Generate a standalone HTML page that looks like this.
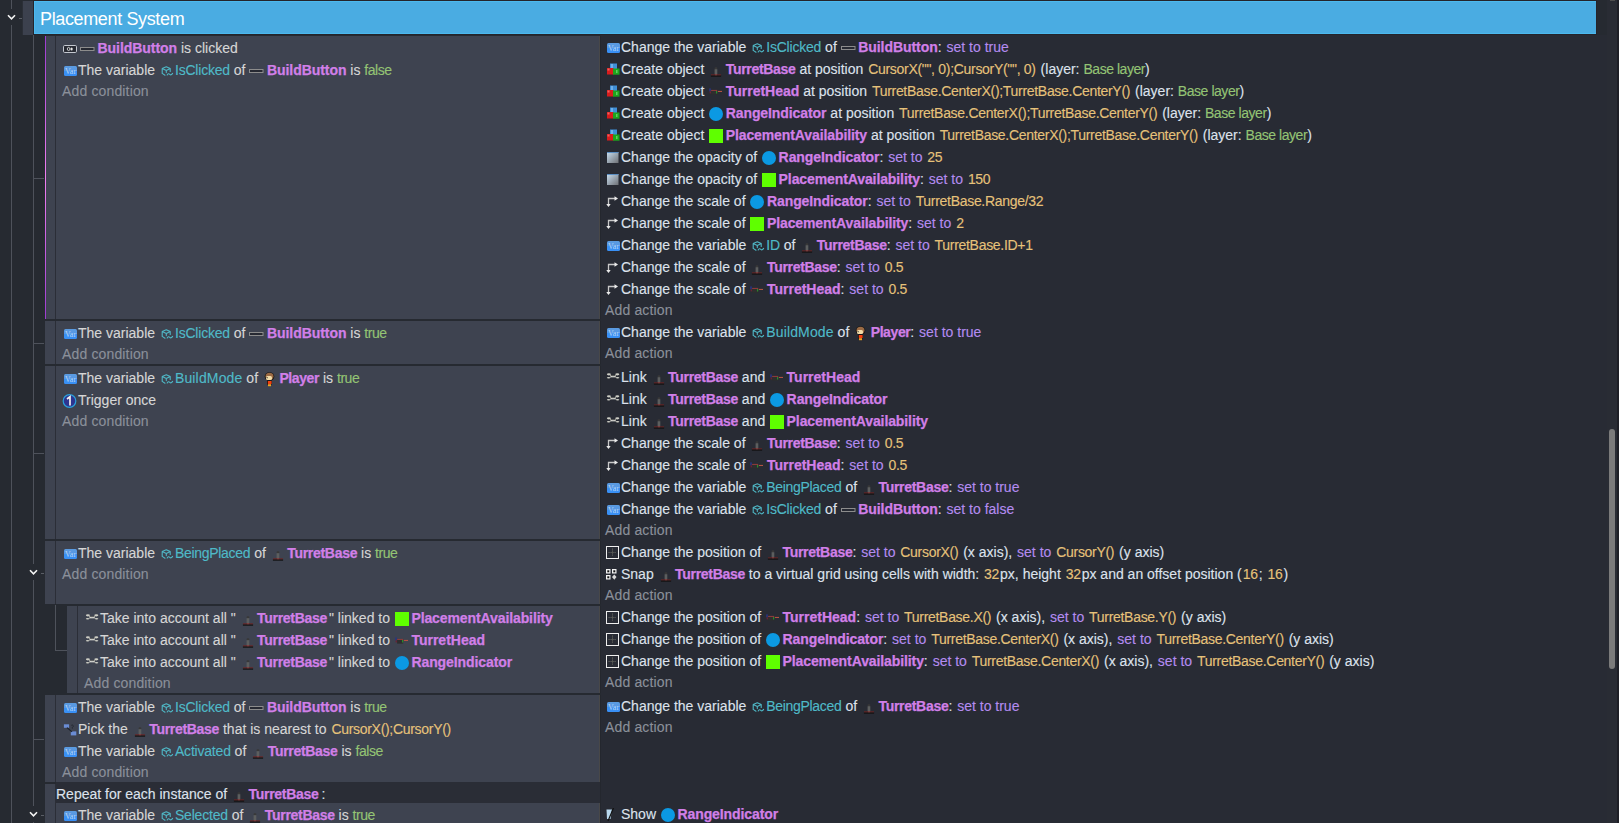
<!DOCTYPE html><html><head><meta charset="utf-8"><style>
html,body{margin:0;padding:0;width:1619px;height:823px;overflow:hidden;background:#262a31}
body>div,body>svg{position:absolute}
.ln{position:absolute;white-space:pre;font-family:"Liberation Sans",sans-serif;font-size:14px;line-height:22px;height:22px;-webkit-text-stroke:0.12px currentColor}
.c{color:#d6d6d6} .a{color:#dde2ec} .add{color:#8b909a;letter-spacing:0.15px}
.o{color:#d17fe8;font-weight:bold;-webkit-text-stroke:0.25px currentColor} .v{color:#4fbac8;letter-spacing:-0.2px} .p{color:#b48cf0;letter-spacing:0;margin-left:1px} .e{color:#e6c27a;padding:0 1px;letter-spacing:-0.3px} .g{color:#94c474;letter-spacing:-0.45px}
.ic{display:inline-block;position:relative} .ic svg{position:absolute;left:0;top:0;display:block}
.hd{position:absolute;font-family:"Liberation Sans",sans-serif;font-size:18px;letter-spacing:-0.36px;line-height:22px;color:#fff;white-space:pre}
</style></head><body><div style="left:0px;top:0px;width:1619px;height:823px;background:#262a31;"></div>
<div style="left:601px;top:35px;width:1006px;height:788px;background:#282b34;"></div>
<div style="left:11px;top:0px;width:1px;height:9px;background:#4e525b;"></div>
<div style="left:11px;top:25px;width:1px;height:798px;background:#4e525b;"></div>
<div style="left:19px;top:18px;width:3px;height:1px;background:#5a5e66;"></div>
<div style="left:33px;top:35px;width:1px;height:529px;background:#4e525b;"></div>
<div style="left:33px;top:580px;width:1px;height:226px;background:#4e525b;"></div>
<div style="left:33px;top:822px;width:1px;height:1px;background:#4e525b;"></div>
<div style="left:33px;top:178px;width:11px;height:1px;background:#4e525b;"></div>
<div style="left:33px;top:343px;width:11px;height:1px;background:#4e525b;"></div>
<div style="left:33px;top:453px;width:11px;height:1px;background:#4e525b;"></div>
<div style="left:33px;top:739px;width:11px;height:1px;background:#4e525b;"></div>
<div style="left:41px;top:573px;width:3px;height:1px;background:#5a5e66;"></div>
<div style="left:41px;top:815px;width:3px;height:1px;background:#5a5e66;"></div>
<div style="left:55px;top:605px;width:1px;height:46px;background:#4e525b;"></div>
<div style="left:55px;top:650px;width:12px;height:1px;background:#4e525b;"></div>
<div style="left:22px;top:1px;width:1px;height:34px;background:#2b2f37;"></div>
<div style="left:23px;top:1px;width:10px;height:34px;background:#3c414e;"></div>
<div style="left:33px;top:0px;width:1564px;height:35px;background:#25242b;"></div>
<div style="left:34px;top:1px;width:1562px;height:33px;background:#4cb9ee;"></div>
<div style="left:35px;top:2px;width:1561px;height:31px;background:#4aace2;"></div>
<div class="hd" style="left:40px;top:8px">Placement System</div>
<div style="left:45px;top:36px;width:10px;height:283px;background:#3e4350;"></div>
<div style="left:55px;top:36px;width:1px;height:283px;background:#2b2e37;"></div>
<div style="left:56px;top:36px;width:543px;height:283px;background:#3e4350;"></div>
<div style="left:599px;top:36px;width:1px;height:283px;background:#484848;"></div>
<div style="left:600px;top:36px;width:1px;height:283px;background:#24272e;"></div>
<div style="left:45px;top:36px;width:1px;height:283px;background:;background:linear-gradient(#9b3bd0,#f07ff0 50%,#9b3bd0)"></div>
<div style="left:45px;top:321px;width:10px;height:43px;background:#3e4350;"></div>
<div style="left:55px;top:321px;width:1px;height:43px;background:#2b2e37;"></div>
<div style="left:56px;top:321px;width:543px;height:43px;background:#3e4350;"></div>
<div style="left:599px;top:321px;width:1px;height:43px;background:#484848;"></div>
<div style="left:600px;top:321px;width:1px;height:43px;background:#24272e;"></div>
<div style="left:45px;top:366px;width:10px;height:173px;background:#3e4350;"></div>
<div style="left:55px;top:366px;width:1px;height:173px;background:#2b2e37;"></div>
<div style="left:56px;top:366px;width:543px;height:173px;background:#3e4350;"></div>
<div style="left:599px;top:366px;width:1px;height:173px;background:#484848;"></div>
<div style="left:600px;top:366px;width:1px;height:173px;background:#24272e;"></div>
<div style="left:45px;top:541px;width:10px;height:63px;background:#3e4350;"></div>
<div style="left:55px;top:541px;width:1px;height:63px;background:#2b2e37;"></div>
<div style="left:56px;top:541px;width:543px;height:63px;background:#3e4350;"></div>
<div style="left:599px;top:541px;width:1px;height:63px;background:#484848;"></div>
<div style="left:600px;top:541px;width:1px;height:63px;background:#24272e;"></div>
<div style="left:67px;top:606px;width:10px;height:87px;background:#3e4350;"></div>
<div style="left:77px;top:606px;width:1px;height:87px;background:#2b2e37;"></div>
<div style="left:78px;top:606px;width:521px;height:87px;background:#3e4350;"></div>
<div style="left:599px;top:606px;width:1px;height:87px;background:#484848;"></div>
<div style="left:600px;top:606px;width:1px;height:87px;background:#24272e;"></div>
<div style="left:45px;top:695px;width:10px;height:87px;background:#3e4350;"></div>
<div style="left:55px;top:695px;width:1px;height:87px;background:#2b2e37;"></div>
<div style="left:56px;top:695px;width:543px;height:87px;background:#3e4350;"></div>
<div style="left:599px;top:695px;width:1px;height:87px;background:#484848;"></div>
<div style="left:600px;top:695px;width:1px;height:87px;background:#24272e;"></div>
<div style="left:45px;top:784px;width:10px;height:39px;background:#3e4350;"></div>
<div style="left:55px;top:784px;width:1px;height:39px;background:#2b2e37;"></div>
<div style="left:56px;top:782px;width:544px;height:21px;background:#2a2d36;"></div>
<div style="left:56px;top:803px;width:543px;height:20px;background:#3e4350;"></div>
<div style="left:599px;top:803px;width:1px;height:20px;background:#484848;"></div>
<div style="left:600px;top:782px;width:1px;height:41px;background:#24272e;"></div>
<svg style="position:absolute;left:7px;top:13.5px" width="9" height="7" viewBox="0 0 9 7"><path d="M1 1.2 L4.5 4.8 L8 1.2" stroke="#f4f4f4" stroke-width="1.6" fill="none"/></svg>
<svg style="position:absolute;left:29px;top:569px" width="9" height="7" viewBox="0 0 9 7"><path d="M1 1.2 L4.5 4.8 L8 1.2" stroke="#f4f4f4" stroke-width="1.6" fill="none"/></svg>
<svg style="position:absolute;left:29px;top:811px" width="9" height="7" viewBox="0 0 9 7"><path d="M1 1.2 L4.5 4.8 L8 1.2" stroke="#f4f4f4" stroke-width="1.6" fill="none"/></svg>
<div style="left:1607px;top:0px;width:10px;height:823px;background:#292c34;"></div>
<div style="left:1617px;top:0px;width:2px;height:823px;background:#1e1f26;"></div>
<div style="left:1609px;top:429px;width:6px;height:240px;background:#7b7b7b;border-radius:3px"></div>
<div style="left:1610px;top:0px;width:5px;height:1px;background:#4e4e4e;"></div>
<div class="ln c" style="left:62px;top:37px"><span class="ic" style="width:18px;height:8px;vertical-align:0px;margin-left:0px;margin-right:0px"><svg width="18" height="8" viewBox="0 0 18 8"><rect x="1.5" y="0.5" width="13" height="7" rx="1.2" stroke="#c4c8d0" stroke-width="1" fill="#272a33"/><ellipse cx="6.6" cy="4" rx="1.3" ry="1.6" stroke="#e8e8e8" stroke-width="0.8" fill="none"/><ellipse cx="9.6" cy="4" rx="1.1" ry="1.5" fill="#e8e8e8"/></svg></span><span class="ic" style="width:16px;height:4px;vertical-align:2px;margin-left:0px;margin-right:0px"><svg width="16" height="4" viewBox="0 0 16 4"><rect x="0.5" y="0.5" width="13.5" height="3" stroke="#8c8c8c" stroke-width="1" fill="#262932"/></svg></span><span style="display:inline-block;width:1.5px"></span><b class="o" style="letter-spacing:-0.05px">BuildButton</b> is clicked</div>
<div class="ln c" style="left:62px;top:59px"><span class="ic" style="width:16px;height:10px;vertical-align:-1px;margin-left:0px;margin-right:0px"><svg width="16" height="10" viewBox="0 0 16 10"><defs><linearGradient id="gv" x1="0" y1="0" x2="0" y2="1"><stop offset="0" stop-color="#5b9be0"/><stop offset=".5" stop-color="#5597e6"/><stop offset=".5" stop-color="#3a8ff2"/><stop offset="1" stop-color="#3990f6"/></linearGradient></defs><rect x="2" y="0" width="13" height="10" rx="1.5" fill="url(#gv)"/><text x="8.5" y="8" font-family="Liberation Serif" font-size="8" fill="#b8d4f4" text-anchor="middle">Var</text></svg></span>The variable <span class="ic" style="width:16px;height:10px;vertical-align:-1px;margin-left:0px;margin-right:0px"><svg width="16" height="10" viewBox="0 0 16 10"><g stroke="#4fb8c6" stroke-width="1.1" fill="none" stroke-linejoin="round" stroke-linecap="round"><path d="M3.2 7.4 V2.6 L7.3 0.7 L11.2 2.6 V5.4 M3.2 2.6 L7.3 4.5 L11.2 2.6 M7.3 4.5 V6.6 M3.2 7.4 L6 9.2"/><path d="M8.2 9 Q9.3 7 10.8 8.3 Q12.1 9.7 13.6 7.4"/></g></svg></span><span class="v">IsClicked</span> of <span class="ic" style="width:16px;height:4px;vertical-align:2px;margin-left:0px;margin-right:0px"><svg width="16" height="4" viewBox="0 0 16 4"><rect x="0.5" y="0.5" width="13.5" height="3" stroke="#8c8c8c" stroke-width="1" fill="#262932"/></svg></span><span style="display:inline-block;width:1.5px"></span><b class="o" style="letter-spacing:-0.05px">BuildButton</b> is <span class="g">false</span></div>
<div class="ln add" style="left:62px;top:80px">Add condition</div>
<div class="ln a" style="left:605px;top:36px"><span class="ic" style="width:16px;height:10px;vertical-align:-1px;margin-left:0px;margin-right:0px"><svg width="16" height="10" viewBox="0 0 16 10"><defs><linearGradient id="gv" x1="0" y1="0" x2="0" y2="1"><stop offset="0" stop-color="#5b9be0"/><stop offset=".5" stop-color="#5597e6"/><stop offset=".5" stop-color="#3a8ff2"/><stop offset="1" stop-color="#3990f6"/></linearGradient></defs><rect x="2" y="0" width="13" height="10" rx="1.5" fill="url(#gv)"/><text x="8.5" y="8" font-family="Liberation Serif" font-size="8" fill="#b8d4f4" text-anchor="middle">Var</text></svg></span>Change the variable <span class="ic" style="width:16px;height:10px;vertical-align:-1px;margin-left:0px;margin-right:0px"><svg width="16" height="10" viewBox="0 0 16 10"><g stroke="#4fb8c6" stroke-width="1.1" fill="none" stroke-linejoin="round" stroke-linecap="round"><path d="M3.2 7.4 V2.6 L7.3 0.7 L11.2 2.6 V5.4 M3.2 2.6 L7.3 4.5 L11.2 2.6 M7.3 4.5 V6.6 M3.2 7.4 L6 9.2"/><path d="M8.2 9 Q9.3 7 10.8 8.3 Q12.1 9.7 13.6 7.4"/></g></svg></span><span class="v">IsClicked</span> of <span class="ic" style="width:16px;height:4px;vertical-align:2px;margin-left:0px;margin-right:0px"><svg width="16" height="4" viewBox="0 0 16 4"><rect x="0.5" y="0.5" width="13.5" height="3" stroke="#8c8c8c" stroke-width="1" fill="#262932"/></svg></span><span style="display:inline-block;width:1.5px"></span><b class="o" style="letter-spacing:-0.05px">BuildButton</b>: <span class="p">set to true</span></div>
<div class="ln a" style="left:605px;top:58px"><span class="ic" style="width:16px;height:12px;vertical-align:-1px;margin-left:0px;margin-right:0px"><svg width="16" height="12" viewBox="0 0 16 12"><rect x="5" y="0.5" width="7" height="5.5" fill="#3f8fd8"/><rect x="6" y="1" width="2" height="4" fill="#6fb0ea"/><rect x="2" y="5" width="6.5" height="6.5" fill="#d91c1c"/><rect x="2.5" y="5.5" width="2" height="2" fill="#f06060"/><rect x="8" y="5.5" width="6.5" height="6.2" fill="#1da51d"/><rect x="11" y="7" width="1.5" height="3" fill="#60d060"/></svg></span>Create object <span class="ic" style="width:16px;height:10px;vertical-align:-3px;margin-left:0px;margin-right:0px"><svg width="16" height="10" viewBox="0 0 16 10"><rect x="6.6" y="0.3" width="2.7" height="2" rx="0.8" fill="#383838"/><rect x="6.6" y="2.2" width="2.7" height="5.4" fill="#5c5e5e"/><rect x="3" y="7.4" width="10" height="1.2" fill="#6e2222"/><rect x="7" y="7.4" width="2" height="1.2" fill="#8a4444"/><rect x="2.9" y="8.5" width="10.2" height="1.2" fill="#121212"/></svg></span><span style="display:inline-block;width:1.5px"></span><b class="o" style="letter-spacing:-0.3px">TurretBase</b> at position <span class="e">CursorX(&quot;&quot;, 0);CursorY(&quot;&quot;, 0)</span> (layer: <span class="g">Base layer</span>)</div>
<div class="ln a" style="left:605px;top:80px"><span class="ic" style="width:16px;height:12px;vertical-align:-1px;margin-left:0px;margin-right:0px"><svg width="16" height="12" viewBox="0 0 16 12"><rect x="5" y="0.5" width="7" height="5.5" fill="#3f8fd8"/><rect x="6" y="1" width="2" height="4" fill="#6fb0ea"/><rect x="2" y="5" width="6.5" height="6.5" fill="#d91c1c"/><rect x="2.5" y="5.5" width="2" height="2" fill="#f06060"/><rect x="8" y="5.5" width="6.5" height="6.2" fill="#1da51d"/><rect x="11" y="7" width="1.5" height="3" fill="#60d060"/></svg></span>Create object <span class="ic" style="width:16px;height:7px;vertical-align:1px;margin-left:0px;margin-right:0px"><svg width="16" height="7" viewBox="0 0 16 7"><rect x="1.2" y="0.4" width="1.6" height="3" fill="#2a3580"/><rect x="1.6" y="3.4" width="1.6" height="2" fill="#6a2232"/><rect x="3.1" y="2" width="6.1" height="4.6" fill="#2e2e2e"/><rect x="3.1" y="1.9" width="6.1" height="1.1" fill="#8a3a3a"/><rect x="8" y="3" width="1.2" height="2.5" fill="#2a8a2a"/><rect x="9.9" y="2.9" width="4.1" height="1.1" fill="#b25242"/></svg></span><span style="display:inline-block;width:1.5px"></span><b class="o">TurretHead</b> at position <span class="e">TurretBase.CenterX();TurretBase.CenterY()</span> (layer: <span class="g">Base layer</span>)</div>
<div class="ln a" style="left:605px;top:102px"><span class="ic" style="width:16px;height:12px;vertical-align:-1px;margin-left:0px;margin-right:0px"><svg width="16" height="12" viewBox="0 0 16 12"><rect x="5" y="0.5" width="7" height="5.5" fill="#3f8fd8"/><rect x="6" y="1" width="2" height="4" fill="#6fb0ea"/><rect x="2" y="5" width="6.5" height="6.5" fill="#d91c1c"/><rect x="2.5" y="5.5" width="2" height="2" fill="#f06060"/><rect x="8" y="5.5" width="6.5" height="6.2" fill="#1da51d"/><rect x="11" y="7" width="1.5" height="3" fill="#60d060"/></svg></span>Create object <span class="ic" style="width:16px;height:14px;vertical-align:-3px;margin-left:0px;margin-right:0px"><svg width="16" height="14" viewBox="0 0 16 14"><circle cx="8" cy="7" r="7" fill="#0b99e3"/></svg></span><span style="display:inline-block;width:1.5px"></span><b class="o" style="letter-spacing:-0.08px">RangeIndicator</b> at position <span class="e">TurretBase.CenterX();TurretBase.CenterY()</span> (layer: <span class="g">Base layer</span>)</div>
<div class="ln a" style="left:605px;top:124px"><span class="ic" style="width:16px;height:12px;vertical-align:-1px;margin-left:0px;margin-right:0px"><svg width="16" height="12" viewBox="0 0 16 12"><rect x="5" y="0.5" width="7" height="5.5" fill="#3f8fd8"/><rect x="6" y="1" width="2" height="4" fill="#6fb0ea"/><rect x="2" y="5" width="6.5" height="6.5" fill="#d91c1c"/><rect x="2.5" y="5.5" width="2" height="2" fill="#f06060"/><rect x="8" y="5.5" width="6.5" height="6.2" fill="#1da51d"/><rect x="11" y="7" width="1.5" height="3" fill="#60d060"/></svg></span>Create object <span class="ic" style="width:16px;height:14px;vertical-align:-3px;margin-left:0px;margin-right:0px"><svg width="16" height="14" viewBox="0 0 16 14"><rect x="1" y="0" width="14" height="14" fill="#5fff00"/></svg></span><span style="display:inline-block;width:1.5px"></span><b class="o" style="letter-spacing:-0.1px">PlacementAvailability</b> at position <span class="e">TurretBase.CenterX();TurretBase.CenterY()</span> (layer: <span class="g">Base layer</span>)</div>
<div class="ln a" style="left:605px;top:146px"><span class="ic" style="width:16px;height:11px;vertical-align:-1px;margin-left:0px;margin-right:0px"><svg width="16" height="11" viewBox="0 0 16 11"><defs><linearGradient id="go" x1="0" y1="0" x2="1" y2="1"><stop offset="0" stop-color="#c8def0"/><stop offset="1" stop-color="#6e7075"/></linearGradient></defs><rect x="2" y="0" width="11.5" height="11" fill="url(#go)"/><rect x="2" y="0" width="11.5" height="1" fill="#5b8fc4"/></svg></span>Change the opacity of <span class="ic" style="width:16px;height:14px;vertical-align:-3px;margin-left:0px;margin-right:0px"><svg width="16" height="14" viewBox="0 0 16 14"><circle cx="8" cy="7" r="7" fill="#0b99e3"/></svg></span><span style="display:inline-block;width:1.5px"></span><b class="o" style="letter-spacing:-0.08px">RangeIndicator</b>: <span class="p">set to</span> <span class="e">25</span></div>
<div class="ln a" style="left:605px;top:168px"><span class="ic" style="width:16px;height:11px;vertical-align:-1px;margin-left:0px;margin-right:0px"><svg width="16" height="11" viewBox="0 0 16 11"><defs><linearGradient id="go" x1="0" y1="0" x2="1" y2="1"><stop offset="0" stop-color="#c8def0"/><stop offset="1" stop-color="#6e7075"/></linearGradient></defs><rect x="2" y="0" width="11.5" height="11" fill="url(#go)"/><rect x="2" y="0" width="11.5" height="1" fill="#5b8fc4"/></svg></span>Change the opacity of <span class="ic" style="width:16px;height:14px;vertical-align:-3px;margin-left:0px;margin-right:0px"><svg width="16" height="14" viewBox="0 0 16 14"><rect x="1" y="0" width="14" height="14" fill="#5fff00"/></svg></span><span style="display:inline-block;width:1.5px"></span><b class="o" style="letter-spacing:-0.1px">PlacementAvailability</b>: <span class="p">set to</span> <span class="e">150</span></div>
<div class="ln a" style="left:605px;top:190px"><span class="ic" style="width:16px;height:11px;vertical-align:-1px;margin-left:0px;margin-right:0px"><svg width="16" height="11" viewBox="0 0 16 11"><path d="M3.5 10 V2.5 H10" stroke="#c8c8c8" stroke-width="1.3" fill="none"/><path d="M9.5 0.3 L13 2.5 L9.5 4.7 Z" fill="#eaeaea"/><path d="M1.3 8 L3.5 11 L5.7 8 Z" fill="#eaeaea"/></svg></span>Change the scale of <span class="ic" style="width:16px;height:14px;vertical-align:-3px;margin-left:0px;margin-right:0px"><svg width="16" height="14" viewBox="0 0 16 14"><circle cx="8" cy="7" r="7" fill="#0b99e3"/></svg></span><span style="display:inline-block;width:1.5px"></span><b class="o" style="letter-spacing:-0.08px">RangeIndicator</b>: <span class="p">set to</span> <span class="e">TurretBase.Range/32</span></div>
<div class="ln a" style="left:605px;top:212px"><span class="ic" style="width:16px;height:11px;vertical-align:-1px;margin-left:0px;margin-right:0px"><svg width="16" height="11" viewBox="0 0 16 11"><path d="M3.5 10 V2.5 H10" stroke="#c8c8c8" stroke-width="1.3" fill="none"/><path d="M9.5 0.3 L13 2.5 L9.5 4.7 Z" fill="#eaeaea"/><path d="M1.3 8 L3.5 11 L5.7 8 Z" fill="#eaeaea"/></svg></span>Change the scale of <span class="ic" style="width:16px;height:14px;vertical-align:-3px;margin-left:0px;margin-right:0px"><svg width="16" height="14" viewBox="0 0 16 14"><rect x="1" y="0" width="14" height="14" fill="#5fff00"/></svg></span><span style="display:inline-block;width:1.5px"></span><b class="o" style="letter-spacing:-0.1px">PlacementAvailability</b>: <span class="p">set to</span> <span class="e">2</span></div>
<div class="ln a" style="left:605px;top:234px"><span class="ic" style="width:16px;height:10px;vertical-align:-1px;margin-left:0px;margin-right:0px"><svg width="16" height="10" viewBox="0 0 16 10"><defs><linearGradient id="gv" x1="0" y1="0" x2="0" y2="1"><stop offset="0" stop-color="#5b9be0"/><stop offset=".5" stop-color="#5597e6"/><stop offset=".5" stop-color="#3a8ff2"/><stop offset="1" stop-color="#3990f6"/></linearGradient></defs><rect x="2" y="0" width="13" height="10" rx="1.5" fill="url(#gv)"/><text x="8.5" y="8" font-family="Liberation Serif" font-size="8" fill="#b8d4f4" text-anchor="middle">Var</text></svg></span>Change the variable <span class="ic" style="width:16px;height:10px;vertical-align:-1px;margin-left:0px;margin-right:0px"><svg width="16" height="10" viewBox="0 0 16 10"><g stroke="#4fb8c6" stroke-width="1.1" fill="none" stroke-linejoin="round" stroke-linecap="round"><path d="M3.2 7.4 V2.6 L7.3 0.7 L11.2 2.6 V5.4 M3.2 2.6 L7.3 4.5 L11.2 2.6 M7.3 4.5 V6.6 M3.2 7.4 L6 9.2"/><path d="M8.2 9 Q9.3 7 10.8 8.3 Q12.1 9.7 13.6 7.4"/></g></svg></span><span class="v">ID</span> of <span class="ic" style="width:16px;height:10px;vertical-align:-3px;margin-left:0px;margin-right:0px"><svg width="16" height="10" viewBox="0 0 16 10"><rect x="6.6" y="0.3" width="2.7" height="2" rx="0.8" fill="#383838"/><rect x="6.6" y="2.2" width="2.7" height="5.4" fill="#5c5e5e"/><rect x="3" y="7.4" width="10" height="1.2" fill="#6e2222"/><rect x="7" y="7.4" width="2" height="1.2" fill="#8a4444"/><rect x="2.9" y="8.5" width="10.2" height="1.2" fill="#121212"/></svg></span><span style="display:inline-block;width:1.5px"></span><b class="o" style="letter-spacing:-0.3px">TurretBase</b>: <span class="p">set to</span> <span class="e">TurretBase.ID+1</span></div>
<div class="ln a" style="left:605px;top:256px"><span class="ic" style="width:16px;height:11px;vertical-align:-1px;margin-left:0px;margin-right:0px"><svg width="16" height="11" viewBox="0 0 16 11"><path d="M3.5 10 V2.5 H10" stroke="#c8c8c8" stroke-width="1.3" fill="none"/><path d="M9.5 0.3 L13 2.5 L9.5 4.7 Z" fill="#eaeaea"/><path d="M1.3 8 L3.5 11 L5.7 8 Z" fill="#eaeaea"/></svg></span>Change the scale of <span class="ic" style="width:16px;height:10px;vertical-align:-3px;margin-left:0px;margin-right:0px"><svg width="16" height="10" viewBox="0 0 16 10"><rect x="6.6" y="0.3" width="2.7" height="2" rx="0.8" fill="#383838"/><rect x="6.6" y="2.2" width="2.7" height="5.4" fill="#5c5e5e"/><rect x="3" y="7.4" width="10" height="1.2" fill="#6e2222"/><rect x="7" y="7.4" width="2" height="1.2" fill="#8a4444"/><rect x="2.9" y="8.5" width="10.2" height="1.2" fill="#121212"/></svg></span><span style="display:inline-block;width:1.5px"></span><b class="o" style="letter-spacing:-0.3px">TurretBase</b>: <span class="p">set to</span> <span class="e">0.5</span></div>
<div class="ln a" style="left:605px;top:278px"><span class="ic" style="width:16px;height:11px;vertical-align:-1px;margin-left:0px;margin-right:0px"><svg width="16" height="11" viewBox="0 0 16 11"><path d="M3.5 10 V2.5 H10" stroke="#c8c8c8" stroke-width="1.3" fill="none"/><path d="M9.5 0.3 L13 2.5 L9.5 4.7 Z" fill="#eaeaea"/><path d="M1.3 8 L3.5 11 L5.7 8 Z" fill="#eaeaea"/></svg></span>Change the scale of <span class="ic" style="width:16px;height:7px;vertical-align:1px;margin-left:0px;margin-right:0px"><svg width="16" height="7" viewBox="0 0 16 7"><rect x="1.2" y="0.4" width="1.6" height="3" fill="#2a3580"/><rect x="1.6" y="3.4" width="1.6" height="2" fill="#6a2232"/><rect x="3.1" y="2" width="6.1" height="4.6" fill="#2e2e2e"/><rect x="3.1" y="1.9" width="6.1" height="1.1" fill="#8a3a3a"/><rect x="8" y="3" width="1.2" height="2.5" fill="#2a8a2a"/><rect x="9.9" y="2.9" width="4.1" height="1.1" fill="#b25242"/></svg></span><span style="display:inline-block;width:1.5px"></span><b class="o">TurretHead</b>: <span class="p">set to</span> <span class="e">0.5</span></div>
<div class="ln add" style="left:605px;top:299px">Add action</div>
<div class="ln c" style="left:62px;top:322px"><span class="ic" style="width:16px;height:10px;vertical-align:-1px;margin-left:0px;margin-right:0px"><svg width="16" height="10" viewBox="0 0 16 10"><defs><linearGradient id="gv" x1="0" y1="0" x2="0" y2="1"><stop offset="0" stop-color="#5b9be0"/><stop offset=".5" stop-color="#5597e6"/><stop offset=".5" stop-color="#3a8ff2"/><stop offset="1" stop-color="#3990f6"/></linearGradient></defs><rect x="2" y="0" width="13" height="10" rx="1.5" fill="url(#gv)"/><text x="8.5" y="8" font-family="Liberation Serif" font-size="8" fill="#b8d4f4" text-anchor="middle">Var</text></svg></span>The variable <span class="ic" style="width:16px;height:10px;vertical-align:-1px;margin-left:0px;margin-right:0px"><svg width="16" height="10" viewBox="0 0 16 10"><g stroke="#4fb8c6" stroke-width="1.1" fill="none" stroke-linejoin="round" stroke-linecap="round"><path d="M3.2 7.4 V2.6 L7.3 0.7 L11.2 2.6 V5.4 M3.2 2.6 L7.3 4.5 L11.2 2.6 M7.3 4.5 V6.6 M3.2 7.4 L6 9.2"/><path d="M8.2 9 Q9.3 7 10.8 8.3 Q12.1 9.7 13.6 7.4"/></g></svg></span><span class="v">IsClicked</span> of <span class="ic" style="width:16px;height:4px;vertical-align:2px;margin-left:0px;margin-right:0px"><svg width="16" height="4" viewBox="0 0 16 4"><rect x="0.5" y="0.5" width="13.5" height="3" stroke="#8c8c8c" stroke-width="1" fill="#262932"/></svg></span><span style="display:inline-block;width:1.5px"></span><b class="o" style="letter-spacing:-0.05px">BuildButton</b> is <span class="g">true</span></div>
<div class="ln add" style="left:62px;top:343px">Add condition</div>
<div class="ln a" style="left:605px;top:321px"><span class="ic" style="width:16px;height:10px;vertical-align:-1px;margin-left:0px;margin-right:0px"><svg width="16" height="10" viewBox="0 0 16 10"><defs><linearGradient id="gv" x1="0" y1="0" x2="0" y2="1"><stop offset="0" stop-color="#5b9be0"/><stop offset=".5" stop-color="#5597e6"/><stop offset=".5" stop-color="#3a8ff2"/><stop offset="1" stop-color="#3990f6"/></linearGradient></defs><rect x="2" y="0" width="13" height="10" rx="1.5" fill="url(#gv)"/><text x="8.5" y="8" font-family="Liberation Serif" font-size="8" fill="#b8d4f4" text-anchor="middle">Var</text></svg></span>Change the variable <span class="ic" style="width:16px;height:10px;vertical-align:-1px;margin-left:0px;margin-right:0px"><svg width="16" height="10" viewBox="0 0 16 10"><g stroke="#4fb8c6" stroke-width="1.1" fill="none" stroke-linejoin="round" stroke-linecap="round"><path d="M3.2 7.4 V2.6 L7.3 0.7 L11.2 2.6 V5.4 M3.2 2.6 L7.3 4.5 L11.2 2.6 M7.3 4.5 V6.6 M3.2 7.4 L6 9.2"/><path d="M8.2 9 Q9.3 7 10.8 8.3 Q12.1 9.7 13.6 7.4"/></g></svg></span><span class="v" style="letter-spacing:0.15px">BuildMode</span> of <span class="ic" style="width:16px;height:15px;vertical-align:-4px;margin-left:0px;margin-right:0px"><svg width="16" height="15" viewBox="0 0 16 15"><ellipse cx="7.5" cy="4.5" rx="4.8" ry="4.3" fill="#111"/><ellipse cx="7.5" cy="4.3" rx="4" ry="3.6" fill="#9a6a44"/><rect x="4" y="4" width="6" height="4" rx="1.5" fill="#f2dca8"/><rect x="4.6" y="5" width="1" height="1.3" fill="#333"/><rect x="5" y="8.5" width="5" height="4" fill="#111"/><rect x="5.8" y="9" width="3.8" height="3" fill="#f04010"/><rect x="6" y="12.2" width="3" height="2" fill="#f0a020"/></svg></span><span style="display:inline-block;width:1.5px"></span><b class="o" style="letter-spacing:-0.4px">Player</b>: <span class="p">set to true</span></div>
<div class="ln add" style="left:605px;top:342px">Add action</div>
<div class="ln c" style="left:62px;top:367px"><span class="ic" style="width:16px;height:10px;vertical-align:-1px;margin-left:0px;margin-right:0px"><svg width="16" height="10" viewBox="0 0 16 10"><defs><linearGradient id="gv" x1="0" y1="0" x2="0" y2="1"><stop offset="0" stop-color="#5b9be0"/><stop offset=".5" stop-color="#5597e6"/><stop offset=".5" stop-color="#3a8ff2"/><stop offset="1" stop-color="#3990f6"/></linearGradient></defs><rect x="2" y="0" width="13" height="10" rx="1.5" fill="url(#gv)"/><text x="8.5" y="8" font-family="Liberation Serif" font-size="8" fill="#b8d4f4" text-anchor="middle">Var</text></svg></span>The variable <span class="ic" style="width:16px;height:10px;vertical-align:-1px;margin-left:0px;margin-right:0px"><svg width="16" height="10" viewBox="0 0 16 10"><g stroke="#4fb8c6" stroke-width="1.1" fill="none" stroke-linejoin="round" stroke-linecap="round"><path d="M3.2 7.4 V2.6 L7.3 0.7 L11.2 2.6 V5.4 M3.2 2.6 L7.3 4.5 L11.2 2.6 M7.3 4.5 V6.6 M3.2 7.4 L6 9.2"/><path d="M8.2 9 Q9.3 7 10.8 8.3 Q12.1 9.7 13.6 7.4"/></g></svg></span><span class="v" style="letter-spacing:0.15px">BuildMode</span> of <span class="ic" style="width:16px;height:15px;vertical-align:-4px;margin-left:0px;margin-right:0px"><svg width="16" height="15" viewBox="0 0 16 15"><ellipse cx="7.5" cy="4.5" rx="4.8" ry="4.3" fill="#111"/><ellipse cx="7.5" cy="4.3" rx="4" ry="3.6" fill="#9a6a44"/><rect x="4" y="4" width="6" height="4" rx="1.5" fill="#f2dca8"/><rect x="4.6" y="5" width="1" height="1.3" fill="#333"/><rect x="5" y="8.5" width="5" height="4" fill="#111"/><rect x="5.8" y="9" width="3.8" height="3" fill="#f04010"/><rect x="6" y="12.2" width="3" height="2" fill="#f0a020"/></svg></span><span style="display:inline-block;width:1.5px"></span><b class="o" style="letter-spacing:-0.4px">Player</b> is <span class="g">true</span></div>
<div class="ln c" style="left:62px;top:389px"><span class="ic" style="width:16px;height:14px;vertical-align:-3px;margin-left:0px;margin-right:0px"><svg width="16" height="14" viewBox="0 0 16 14"><circle cx="7.5" cy="7" r="6.3" fill="#2d3490" stroke="#2aa0dc" stroke-width="1.2"/><path d="M5 5 L8 2.8 V11.5" stroke="#f0f0f0" stroke-width="1.7" fill="none"/></svg></span>Trigger once</div>
<div class="ln add" style="left:62px;top:410px">Add condition</div>
<div class="ln a" style="left:605px;top:366px"><span class="ic" style="width:16px;height:6px;vertical-align:3px;margin-left:0px;margin-right:0px"><svg width="16" height="6" viewBox="0 0 16 6"><g fill="#cfcfc6"><ellipse cx="3.9" cy="1.3" rx="2" ry="1.1"/><ellipse cx="12.3" cy="1.3" rx="2" ry="1.1"/><ellipse cx="3.6" cy="4.7" rx="1.7" ry="0.8"/><ellipse cx="12.6" cy="4.7" rx="1.7" ry="0.8"/></g><path d="M5.2 1.8 L6.2 3.6 L4.6 4.6 M11 1.8 L10 3.6 L11.6 4.6" stroke="#bdbdb4" stroke-width="0.9" fill="none"/><rect x="6" y="2.4" width="4.2" height="0.7" fill="#7a7a72"/><rect x="5.8" y="3.2" width="4.6" height="1.1" fill="#eeeee6"/></svg></span>Link <span class="ic" style="width:16px;height:10px;vertical-align:-3px;margin-left:0px;margin-right:0px"><svg width="16" height="10" viewBox="0 0 16 10"><rect x="6.6" y="0.3" width="2.7" height="2" rx="0.8" fill="#383838"/><rect x="6.6" y="2.2" width="2.7" height="5.4" fill="#5c5e5e"/><rect x="3" y="7.4" width="10" height="1.2" fill="#6e2222"/><rect x="7" y="7.4" width="2" height="1.2" fill="#8a4444"/><rect x="2.9" y="8.5" width="10.2" height="1.2" fill="#121212"/></svg></span><span style="display:inline-block;width:1.5px"></span><b class="o" style="letter-spacing:-0.3px">TurretBase</b> and <span class="ic" style="width:16px;height:7px;vertical-align:1px;margin-left:0px;margin-right:0px"><svg width="16" height="7" viewBox="0 0 16 7"><rect x="1.2" y="0.4" width="1.6" height="3" fill="#2a3580"/><rect x="1.6" y="3.4" width="1.6" height="2" fill="#6a2232"/><rect x="3.1" y="2" width="6.1" height="4.6" fill="#2e2e2e"/><rect x="3.1" y="1.9" width="6.1" height="1.1" fill="#8a3a3a"/><rect x="8" y="3" width="1.2" height="2.5" fill="#2a8a2a"/><rect x="9.9" y="2.9" width="4.1" height="1.1" fill="#b25242"/></svg></span><span style="display:inline-block;width:1.5px"></span><b class="o">TurretHead</b></div>
<div class="ln a" style="left:605px;top:388px"><span class="ic" style="width:16px;height:6px;vertical-align:3px;margin-left:0px;margin-right:0px"><svg width="16" height="6" viewBox="0 0 16 6"><g fill="#cfcfc6"><ellipse cx="3.9" cy="1.3" rx="2" ry="1.1"/><ellipse cx="12.3" cy="1.3" rx="2" ry="1.1"/><ellipse cx="3.6" cy="4.7" rx="1.7" ry="0.8"/><ellipse cx="12.6" cy="4.7" rx="1.7" ry="0.8"/></g><path d="M5.2 1.8 L6.2 3.6 L4.6 4.6 M11 1.8 L10 3.6 L11.6 4.6" stroke="#bdbdb4" stroke-width="0.9" fill="none"/><rect x="6" y="2.4" width="4.2" height="0.7" fill="#7a7a72"/><rect x="5.8" y="3.2" width="4.6" height="1.1" fill="#eeeee6"/></svg></span>Link <span class="ic" style="width:16px;height:10px;vertical-align:-3px;margin-left:0px;margin-right:0px"><svg width="16" height="10" viewBox="0 0 16 10"><rect x="6.6" y="0.3" width="2.7" height="2" rx="0.8" fill="#383838"/><rect x="6.6" y="2.2" width="2.7" height="5.4" fill="#5c5e5e"/><rect x="3" y="7.4" width="10" height="1.2" fill="#6e2222"/><rect x="7" y="7.4" width="2" height="1.2" fill="#8a4444"/><rect x="2.9" y="8.5" width="10.2" height="1.2" fill="#121212"/></svg></span><span style="display:inline-block;width:1.5px"></span><b class="o" style="letter-spacing:-0.3px">TurretBase</b> and <span class="ic" style="width:16px;height:14px;vertical-align:-3px;margin-left:0px;margin-right:0px"><svg width="16" height="14" viewBox="0 0 16 14"><circle cx="8" cy="7" r="7" fill="#0b99e3"/></svg></span><span style="display:inline-block;width:1.5px"></span><b class="o" style="letter-spacing:-0.08px">RangeIndicator</b></div>
<div class="ln a" style="left:605px;top:410px"><span class="ic" style="width:16px;height:6px;vertical-align:3px;margin-left:0px;margin-right:0px"><svg width="16" height="6" viewBox="0 0 16 6"><g fill="#cfcfc6"><ellipse cx="3.9" cy="1.3" rx="2" ry="1.1"/><ellipse cx="12.3" cy="1.3" rx="2" ry="1.1"/><ellipse cx="3.6" cy="4.7" rx="1.7" ry="0.8"/><ellipse cx="12.6" cy="4.7" rx="1.7" ry="0.8"/></g><path d="M5.2 1.8 L6.2 3.6 L4.6 4.6 M11 1.8 L10 3.6 L11.6 4.6" stroke="#bdbdb4" stroke-width="0.9" fill="none"/><rect x="6" y="2.4" width="4.2" height="0.7" fill="#7a7a72"/><rect x="5.8" y="3.2" width="4.6" height="1.1" fill="#eeeee6"/></svg></span>Link <span class="ic" style="width:16px;height:10px;vertical-align:-3px;margin-left:0px;margin-right:0px"><svg width="16" height="10" viewBox="0 0 16 10"><rect x="6.6" y="0.3" width="2.7" height="2" rx="0.8" fill="#383838"/><rect x="6.6" y="2.2" width="2.7" height="5.4" fill="#5c5e5e"/><rect x="3" y="7.4" width="10" height="1.2" fill="#6e2222"/><rect x="7" y="7.4" width="2" height="1.2" fill="#8a4444"/><rect x="2.9" y="8.5" width="10.2" height="1.2" fill="#121212"/></svg></span><span style="display:inline-block;width:1.5px"></span><b class="o" style="letter-spacing:-0.3px">TurretBase</b> and <span class="ic" style="width:16px;height:14px;vertical-align:-3px;margin-left:0px;margin-right:0px"><svg width="16" height="14" viewBox="0 0 16 14"><rect x="1" y="0" width="14" height="14" fill="#5fff00"/></svg></span><span style="display:inline-block;width:1.5px"></span><b class="o" style="letter-spacing:-0.1px">PlacementAvailability</b></div>
<div class="ln a" style="left:605px;top:432px"><span class="ic" style="width:16px;height:11px;vertical-align:-1px;margin-left:0px;margin-right:0px"><svg width="16" height="11" viewBox="0 0 16 11"><path d="M3.5 10 V2.5 H10" stroke="#c8c8c8" stroke-width="1.3" fill="none"/><path d="M9.5 0.3 L13 2.5 L9.5 4.7 Z" fill="#eaeaea"/><path d="M1.3 8 L3.5 11 L5.7 8 Z" fill="#eaeaea"/></svg></span>Change the scale of <span class="ic" style="width:16px;height:10px;vertical-align:-3px;margin-left:0px;margin-right:0px"><svg width="16" height="10" viewBox="0 0 16 10"><rect x="6.6" y="0.3" width="2.7" height="2" rx="0.8" fill="#383838"/><rect x="6.6" y="2.2" width="2.7" height="5.4" fill="#5c5e5e"/><rect x="3" y="7.4" width="10" height="1.2" fill="#6e2222"/><rect x="7" y="7.4" width="2" height="1.2" fill="#8a4444"/><rect x="2.9" y="8.5" width="10.2" height="1.2" fill="#121212"/></svg></span><span style="display:inline-block;width:1.5px"></span><b class="o" style="letter-spacing:-0.3px">TurretBase</b>: <span class="p">set to</span> <span class="e">0.5</span></div>
<div class="ln a" style="left:605px;top:454px"><span class="ic" style="width:16px;height:11px;vertical-align:-1px;margin-left:0px;margin-right:0px"><svg width="16" height="11" viewBox="0 0 16 11"><path d="M3.5 10 V2.5 H10" stroke="#c8c8c8" stroke-width="1.3" fill="none"/><path d="M9.5 0.3 L13 2.5 L9.5 4.7 Z" fill="#eaeaea"/><path d="M1.3 8 L3.5 11 L5.7 8 Z" fill="#eaeaea"/></svg></span>Change the scale of <span class="ic" style="width:16px;height:7px;vertical-align:1px;margin-left:0px;margin-right:0px"><svg width="16" height="7" viewBox="0 0 16 7"><rect x="1.2" y="0.4" width="1.6" height="3" fill="#2a3580"/><rect x="1.6" y="3.4" width="1.6" height="2" fill="#6a2232"/><rect x="3.1" y="2" width="6.1" height="4.6" fill="#2e2e2e"/><rect x="3.1" y="1.9" width="6.1" height="1.1" fill="#8a3a3a"/><rect x="8" y="3" width="1.2" height="2.5" fill="#2a8a2a"/><rect x="9.9" y="2.9" width="4.1" height="1.1" fill="#b25242"/></svg></span><span style="display:inline-block;width:1.5px"></span><b class="o">TurretHead</b>: <span class="p">set to</span> <span class="e">0.5</span></div>
<div class="ln a" style="left:605px;top:476px"><span class="ic" style="width:16px;height:10px;vertical-align:-1px;margin-left:0px;margin-right:0px"><svg width="16" height="10" viewBox="0 0 16 10"><defs><linearGradient id="gv" x1="0" y1="0" x2="0" y2="1"><stop offset="0" stop-color="#5b9be0"/><stop offset=".5" stop-color="#5597e6"/><stop offset=".5" stop-color="#3a8ff2"/><stop offset="1" stop-color="#3990f6"/></linearGradient></defs><rect x="2" y="0" width="13" height="10" rx="1.5" fill="url(#gv)"/><text x="8.5" y="8" font-family="Liberation Serif" font-size="8" fill="#b8d4f4" text-anchor="middle">Var</text></svg></span>Change the variable <span class="ic" style="width:16px;height:10px;vertical-align:-1px;margin-left:0px;margin-right:0px"><svg width="16" height="10" viewBox="0 0 16 10"><g stroke="#4fb8c6" stroke-width="1.1" fill="none" stroke-linejoin="round" stroke-linecap="round"><path d="M3.2 7.4 V2.6 L7.3 0.7 L11.2 2.6 V5.4 M3.2 2.6 L7.3 4.5 L11.2 2.6 M7.3 4.5 V6.6 M3.2 7.4 L6 9.2"/><path d="M8.2 9 Q9.3 7 10.8 8.3 Q12.1 9.7 13.6 7.4"/></g></svg></span><span class="v" style="letter-spacing:-0.3px">BeingPlaced</span> of <span class="ic" style="width:16px;height:10px;vertical-align:-3px;margin-left:0px;margin-right:0px"><svg width="16" height="10" viewBox="0 0 16 10"><rect x="6.6" y="0.3" width="2.7" height="2" rx="0.8" fill="#383838"/><rect x="6.6" y="2.2" width="2.7" height="5.4" fill="#5c5e5e"/><rect x="3" y="7.4" width="10" height="1.2" fill="#6e2222"/><rect x="7" y="7.4" width="2" height="1.2" fill="#8a4444"/><rect x="2.9" y="8.5" width="10.2" height="1.2" fill="#121212"/></svg></span><span style="display:inline-block;width:1.5px"></span><b class="o" style="letter-spacing:-0.3px">TurretBase</b>: <span class="p">set to true</span></div>
<div class="ln a" style="left:605px;top:498px"><span class="ic" style="width:16px;height:10px;vertical-align:-1px;margin-left:0px;margin-right:0px"><svg width="16" height="10" viewBox="0 0 16 10"><defs><linearGradient id="gv" x1="0" y1="0" x2="0" y2="1"><stop offset="0" stop-color="#5b9be0"/><stop offset=".5" stop-color="#5597e6"/><stop offset=".5" stop-color="#3a8ff2"/><stop offset="1" stop-color="#3990f6"/></linearGradient></defs><rect x="2" y="0" width="13" height="10" rx="1.5" fill="url(#gv)"/><text x="8.5" y="8" font-family="Liberation Serif" font-size="8" fill="#b8d4f4" text-anchor="middle">Var</text></svg></span>Change the variable <span class="ic" style="width:16px;height:10px;vertical-align:-1px;margin-left:0px;margin-right:0px"><svg width="16" height="10" viewBox="0 0 16 10"><g stroke="#4fb8c6" stroke-width="1.1" fill="none" stroke-linejoin="round" stroke-linecap="round"><path d="M3.2 7.4 V2.6 L7.3 0.7 L11.2 2.6 V5.4 M3.2 2.6 L7.3 4.5 L11.2 2.6 M7.3 4.5 V6.6 M3.2 7.4 L6 9.2"/><path d="M8.2 9 Q9.3 7 10.8 8.3 Q12.1 9.7 13.6 7.4"/></g></svg></span><span class="v">IsClicked</span> of <span class="ic" style="width:16px;height:4px;vertical-align:2px;margin-left:0px;margin-right:0px"><svg width="16" height="4" viewBox="0 0 16 4"><rect x="0.5" y="0.5" width="13.5" height="3" stroke="#8c8c8c" stroke-width="1" fill="#262932"/></svg></span><span style="display:inline-block;width:1.5px"></span><b class="o" style="letter-spacing:-0.05px">BuildButton</b>: <span class="p">set to false</span></div>
<div class="ln add" style="left:605px;top:519px">Add action</div>
<div class="ln c" style="left:62px;top:542px"><span class="ic" style="width:16px;height:10px;vertical-align:-1px;margin-left:0px;margin-right:0px"><svg width="16" height="10" viewBox="0 0 16 10"><defs><linearGradient id="gv" x1="0" y1="0" x2="0" y2="1"><stop offset="0" stop-color="#5b9be0"/><stop offset=".5" stop-color="#5597e6"/><stop offset=".5" stop-color="#3a8ff2"/><stop offset="1" stop-color="#3990f6"/></linearGradient></defs><rect x="2" y="0" width="13" height="10" rx="1.5" fill="url(#gv)"/><text x="8.5" y="8" font-family="Liberation Serif" font-size="8" fill="#b8d4f4" text-anchor="middle">Var</text></svg></span>The variable <span class="ic" style="width:16px;height:10px;vertical-align:-1px;margin-left:0px;margin-right:0px"><svg width="16" height="10" viewBox="0 0 16 10"><g stroke="#4fb8c6" stroke-width="1.1" fill="none" stroke-linejoin="round" stroke-linecap="round"><path d="M3.2 7.4 V2.6 L7.3 0.7 L11.2 2.6 V5.4 M3.2 2.6 L7.3 4.5 L11.2 2.6 M7.3 4.5 V6.6 M3.2 7.4 L6 9.2"/><path d="M8.2 9 Q9.3 7 10.8 8.3 Q12.1 9.7 13.6 7.4"/></g></svg></span><span class="v" style="letter-spacing:-0.3px">BeingPlaced</span> of <span class="ic" style="width:16px;height:10px;vertical-align:-3px;margin-left:0px;margin-right:0px"><svg width="16" height="10" viewBox="0 0 16 10"><rect x="6.6" y="0.3" width="2.7" height="2" rx="0.8" fill="#383838"/><rect x="6.6" y="2.2" width="2.7" height="5.4" fill="#5c5e5e"/><rect x="3" y="7.4" width="10" height="1.2" fill="#6e2222"/><rect x="7" y="7.4" width="2" height="1.2" fill="#8a4444"/><rect x="2.9" y="8.5" width="10.2" height="1.2" fill="#121212"/></svg></span><span style="display:inline-block;width:1.5px"></span><b class="o" style="letter-spacing:-0.3px">TurretBase</b> is <span class="g">true</span></div>
<div class="ln add" style="left:62px;top:563px">Add condition</div>
<div class="ln a" style="left:605px;top:541px"><span class="ic" style="width:16px;height:13px;vertical-align:-2px;margin-left:0px;margin-right:0px"><svg width="16" height="13" viewBox="0 0 16 13"><rect x="1.5" y="0.5" width="12" height="12" stroke="#eeeeee" stroke-width="1" fill="none"/><path d="M7.5 2.5 V10.5 M3.5 6.5 H11.5" stroke="#8a8a7a" stroke-width="0.6" stroke-dasharray="1.2 0.8" fill="none"/></svg></span>Change the position of <span class="ic" style="width:16px;height:10px;vertical-align:-3px;margin-left:0px;margin-right:0px"><svg width="16" height="10" viewBox="0 0 16 10"><rect x="6.6" y="0.3" width="2.7" height="2" rx="0.8" fill="#383838"/><rect x="6.6" y="2.2" width="2.7" height="5.4" fill="#5c5e5e"/><rect x="3" y="7.4" width="10" height="1.2" fill="#6e2222"/><rect x="7" y="7.4" width="2" height="1.2" fill="#8a4444"/><rect x="2.9" y="8.5" width="10.2" height="1.2" fill="#121212"/></svg></span><span style="display:inline-block;width:1.5px"></span><b class="o" style="letter-spacing:-0.3px">TurretBase</b>: <span class="p">set to</span> <span class="e">CursorX()</span> (x axis), <span class="p">set to</span> <span class="e">CursorY()</span> (y axis)</div>
<div class="ln a" style="left:605px;top:563px"><span class="ic" style="width:16px;height:11px;vertical-align:-1px;margin-left:0px;margin-right:0px"><svg width="16" height="11" viewBox="0 0 16 11"><rect x="1" y="0" width="4.5" height="4.5" fill="#f2f2f2"/><rect x="2.3" y="1.3" width="2" height="2" fill="#111"/><rect x="7" y="0" width="4.5" height="4.5" fill="#f2f2f2"/><rect x="8.3" y="1.3" width="2" height="2" fill="#111"/><rect x="1" y="6" width="4.5" height="4.5" fill="#f2f2f2"/><rect x="2.3" y="7.3" width="2" height="2" fill="#111"/><path d="M9.3 5.5 L11.5 8 L9.3 10.8 L7 8 Z" fill="#d8d8d8"/></svg></span>Snap <span class="ic" style="width:16px;height:10px;vertical-align:-3px;margin-left:0px;margin-right:0px"><svg width="16" height="10" viewBox="0 0 16 10"><rect x="6.6" y="0.3" width="2.7" height="2" rx="0.8" fill="#383838"/><rect x="6.6" y="2.2" width="2.7" height="5.4" fill="#5c5e5e"/><rect x="3" y="7.4" width="10" height="1.2" fill="#6e2222"/><rect x="7" y="7.4" width="2" height="1.2" fill="#8a4444"/><rect x="2.9" y="8.5" width="10.2" height="1.2" fill="#121212"/></svg></span><span style="display:inline-block;width:1.5px"></span><b class="o" style="letter-spacing:-0.3px">TurretBase</b> to a virtual grid using cells with width: <span class="e">32</span>px, height <span class="e">32</span>px and an offset position (<span class="e">16</span>; <span class="e">16</span>)</div>
<div class="ln add" style="left:605px;top:584px">Add action</div>
<div class="ln c" style="left:84px;top:607px"><span class="ic" style="width:16px;height:6px;vertical-align:3px;margin-left:0px;margin-right:0px"><svg width="16" height="6" viewBox="0 0 16 6"><g fill="#cfcfc6"><ellipse cx="3.9" cy="1.3" rx="2" ry="1.1"/><ellipse cx="12.3" cy="1.3" rx="2" ry="1.1"/><ellipse cx="3.6" cy="4.7" rx="1.7" ry="0.8"/><ellipse cx="12.6" cy="4.7" rx="1.7" ry="0.8"/></g><path d="M5.2 1.8 L6.2 3.6 L4.6 4.6 M11 1.8 L10 3.6 L11.6 4.6" stroke="#bdbdb4" stroke-width="0.9" fill="none"/><rect x="6" y="2.4" width="4.2" height="0.7" fill="#7a7a72"/><rect x="5.8" y="3.2" width="4.6" height="1.1" fill="#eeeee6"/></svg></span>Take into account all &quot; <span class="ic" style="width:16px;height:10px;vertical-align:-3px;margin-left:0px;margin-right:0px"><svg width="16" height="10" viewBox="0 0 16 10"><rect x="6.6" y="0.3" width="2.7" height="2" rx="0.8" fill="#383838"/><rect x="6.6" y="2.2" width="2.7" height="5.4" fill="#5c5e5e"/><rect x="3" y="7.4" width="10" height="1.2" fill="#6e2222"/><rect x="7" y="7.4" width="2" height="1.2" fill="#8a4444"/><rect x="2.9" y="8.5" width="10.2" height="1.2" fill="#121212"/></svg></span><span style="display:inline-block;width:1.5px"></span><b class="o" style="letter-spacing:-0.3px">TurretBase</b><span style="display:inline-block;width:2px"></span>&quot; linked to <span class="ic" style="width:16px;height:14px;vertical-align:-3px;margin-left:0px;margin-right:0px"><svg width="16" height="14" viewBox="0 0 16 14"><rect x="1" y="0" width="14" height="14" fill="#5fff00"/></svg></span><span style="display:inline-block;width:1.5px"></span><b class="o" style="letter-spacing:-0.1px">PlacementAvailability</b></div>
<div class="ln c" style="left:84px;top:629px"><span class="ic" style="width:16px;height:6px;vertical-align:3px;margin-left:0px;margin-right:0px"><svg width="16" height="6" viewBox="0 0 16 6"><g fill="#cfcfc6"><ellipse cx="3.9" cy="1.3" rx="2" ry="1.1"/><ellipse cx="12.3" cy="1.3" rx="2" ry="1.1"/><ellipse cx="3.6" cy="4.7" rx="1.7" ry="0.8"/><ellipse cx="12.6" cy="4.7" rx="1.7" ry="0.8"/></g><path d="M5.2 1.8 L6.2 3.6 L4.6 4.6 M11 1.8 L10 3.6 L11.6 4.6" stroke="#bdbdb4" stroke-width="0.9" fill="none"/><rect x="6" y="2.4" width="4.2" height="0.7" fill="#7a7a72"/><rect x="5.8" y="3.2" width="4.6" height="1.1" fill="#eeeee6"/></svg></span>Take into account all &quot; <span class="ic" style="width:16px;height:10px;vertical-align:-3px;margin-left:0px;margin-right:0px"><svg width="16" height="10" viewBox="0 0 16 10"><rect x="6.6" y="0.3" width="2.7" height="2" rx="0.8" fill="#383838"/><rect x="6.6" y="2.2" width="2.7" height="5.4" fill="#5c5e5e"/><rect x="3" y="7.4" width="10" height="1.2" fill="#6e2222"/><rect x="7" y="7.4" width="2" height="1.2" fill="#8a4444"/><rect x="2.9" y="8.5" width="10.2" height="1.2" fill="#121212"/></svg></span><span style="display:inline-block;width:1.5px"></span><b class="o" style="letter-spacing:-0.3px">TurretBase</b><span style="display:inline-block;width:2px"></span>&quot; linked to <span class="ic" style="width:16px;height:7px;vertical-align:1px;margin-left:0px;margin-right:0px"><svg width="16" height="7" viewBox="0 0 16 7"><rect x="1.2" y="0.4" width="1.6" height="3" fill="#2a3580"/><rect x="1.6" y="3.4" width="1.6" height="2" fill="#6a2232"/><rect x="3.1" y="2" width="6.1" height="4.6" fill="#2e2e2e"/><rect x="3.1" y="1.9" width="6.1" height="1.1" fill="#8a3a3a"/><rect x="8" y="3" width="1.2" height="2.5" fill="#2a8a2a"/><rect x="9.9" y="2.9" width="4.1" height="1.1" fill="#b25242"/></svg></span><span style="display:inline-block;width:1.5px"></span><b class="o">TurretHead</b></div>
<div class="ln c" style="left:84px;top:651px"><span class="ic" style="width:16px;height:6px;vertical-align:3px;margin-left:0px;margin-right:0px"><svg width="16" height="6" viewBox="0 0 16 6"><g fill="#cfcfc6"><ellipse cx="3.9" cy="1.3" rx="2" ry="1.1"/><ellipse cx="12.3" cy="1.3" rx="2" ry="1.1"/><ellipse cx="3.6" cy="4.7" rx="1.7" ry="0.8"/><ellipse cx="12.6" cy="4.7" rx="1.7" ry="0.8"/></g><path d="M5.2 1.8 L6.2 3.6 L4.6 4.6 M11 1.8 L10 3.6 L11.6 4.6" stroke="#bdbdb4" stroke-width="0.9" fill="none"/><rect x="6" y="2.4" width="4.2" height="0.7" fill="#7a7a72"/><rect x="5.8" y="3.2" width="4.6" height="1.1" fill="#eeeee6"/></svg></span>Take into account all &quot; <span class="ic" style="width:16px;height:10px;vertical-align:-3px;margin-left:0px;margin-right:0px"><svg width="16" height="10" viewBox="0 0 16 10"><rect x="6.6" y="0.3" width="2.7" height="2" rx="0.8" fill="#383838"/><rect x="6.6" y="2.2" width="2.7" height="5.4" fill="#5c5e5e"/><rect x="3" y="7.4" width="10" height="1.2" fill="#6e2222"/><rect x="7" y="7.4" width="2" height="1.2" fill="#8a4444"/><rect x="2.9" y="8.5" width="10.2" height="1.2" fill="#121212"/></svg></span><span style="display:inline-block;width:1.5px"></span><b class="o" style="letter-spacing:-0.3px">TurretBase</b><span style="display:inline-block;width:2px"></span>&quot; linked to <span class="ic" style="width:16px;height:14px;vertical-align:-3px;margin-left:0px;margin-right:0px"><svg width="16" height="14" viewBox="0 0 16 14"><circle cx="8" cy="7" r="7" fill="#0b99e3"/></svg></span><span style="display:inline-block;width:1.5px"></span><b class="o" style="letter-spacing:-0.08px">RangeIndicator</b></div>
<div class="ln add" style="left:84px;top:672px">Add condition</div>
<div class="ln a" style="left:605px;top:606px"><span class="ic" style="width:16px;height:13px;vertical-align:-2px;margin-left:0px;margin-right:0px"><svg width="16" height="13" viewBox="0 0 16 13"><rect x="1.5" y="0.5" width="12" height="12" stroke="#eeeeee" stroke-width="1" fill="none"/><path d="M7.5 2.5 V10.5 M3.5 6.5 H11.5" stroke="#8a8a7a" stroke-width="0.6" stroke-dasharray="1.2 0.8" fill="none"/></svg></span>Change the position of <span class="ic" style="width:16px;height:7px;vertical-align:1px;margin-left:0px;margin-right:0px"><svg width="16" height="7" viewBox="0 0 16 7"><rect x="1.2" y="0.4" width="1.6" height="3" fill="#2a3580"/><rect x="1.6" y="3.4" width="1.6" height="2" fill="#6a2232"/><rect x="3.1" y="2" width="6.1" height="4.6" fill="#2e2e2e"/><rect x="3.1" y="1.9" width="6.1" height="1.1" fill="#8a3a3a"/><rect x="8" y="3" width="1.2" height="2.5" fill="#2a8a2a"/><rect x="9.9" y="2.9" width="4.1" height="1.1" fill="#b25242"/></svg></span><span style="display:inline-block;width:1.5px"></span><b class="o">TurretHead</b>: <span class="p">set to</span> <span class="e">TurretBase.X()</span> (x axis), <span class="p">set to</span> <span class="e">TurretBase.Y()</span> (y axis)</div>
<div class="ln a" style="left:605px;top:628px"><span class="ic" style="width:16px;height:13px;vertical-align:-2px;margin-left:0px;margin-right:0px"><svg width="16" height="13" viewBox="0 0 16 13"><rect x="1.5" y="0.5" width="12" height="12" stroke="#eeeeee" stroke-width="1" fill="none"/><path d="M7.5 2.5 V10.5 M3.5 6.5 H11.5" stroke="#8a8a7a" stroke-width="0.6" stroke-dasharray="1.2 0.8" fill="none"/></svg></span>Change the position of <span class="ic" style="width:16px;height:14px;vertical-align:-3px;margin-left:0px;margin-right:0px"><svg width="16" height="14" viewBox="0 0 16 14"><circle cx="8" cy="7" r="7" fill="#0b99e3"/></svg></span><span style="display:inline-block;width:1.5px"></span><b class="o" style="letter-spacing:-0.08px">RangeIndicator</b>: <span class="p">set to</span> <span class="e">TurretBase.CenterX()</span> (x axis), <span class="p">set to</span> <span class="e">TurretBase.CenterY()</span> (y axis)</div>
<div class="ln a" style="left:605px;top:650px"><span class="ic" style="width:16px;height:13px;vertical-align:-2px;margin-left:0px;margin-right:0px"><svg width="16" height="13" viewBox="0 0 16 13"><rect x="1.5" y="0.5" width="12" height="12" stroke="#eeeeee" stroke-width="1" fill="none"/><path d="M7.5 2.5 V10.5 M3.5 6.5 H11.5" stroke="#8a8a7a" stroke-width="0.6" stroke-dasharray="1.2 0.8" fill="none"/></svg></span>Change the position of <span class="ic" style="width:16px;height:14px;vertical-align:-3px;margin-left:0px;margin-right:0px"><svg width="16" height="14" viewBox="0 0 16 14"><rect x="1" y="0" width="14" height="14" fill="#5fff00"/></svg></span><span style="display:inline-block;width:1.5px"></span><b class="o" style="letter-spacing:-0.1px">PlacementAvailability</b>: <span class="p">set to</span> <span class="e">TurretBase.CenterX()</span> (x axis), <span class="p">set to</span> <span class="e">TurretBase.CenterY()</span> (y axis)</div>
<div class="ln add" style="left:605px;top:671px">Add action</div>
<div class="ln c" style="left:62px;top:696px"><span class="ic" style="width:16px;height:10px;vertical-align:-1px;margin-left:0px;margin-right:0px"><svg width="16" height="10" viewBox="0 0 16 10"><defs><linearGradient id="gv" x1="0" y1="0" x2="0" y2="1"><stop offset="0" stop-color="#5b9be0"/><stop offset=".5" stop-color="#5597e6"/><stop offset=".5" stop-color="#3a8ff2"/><stop offset="1" stop-color="#3990f6"/></linearGradient></defs><rect x="2" y="0" width="13" height="10" rx="1.5" fill="url(#gv)"/><text x="8.5" y="8" font-family="Liberation Serif" font-size="8" fill="#b8d4f4" text-anchor="middle">Var</text></svg></span>The variable <span class="ic" style="width:16px;height:10px;vertical-align:-1px;margin-left:0px;margin-right:0px"><svg width="16" height="10" viewBox="0 0 16 10"><g stroke="#4fb8c6" stroke-width="1.1" fill="none" stroke-linejoin="round" stroke-linecap="round"><path d="M3.2 7.4 V2.6 L7.3 0.7 L11.2 2.6 V5.4 M3.2 2.6 L7.3 4.5 L11.2 2.6 M7.3 4.5 V6.6 M3.2 7.4 L6 9.2"/><path d="M8.2 9 Q9.3 7 10.8 8.3 Q12.1 9.7 13.6 7.4"/></g></svg></span><span class="v">IsClicked</span> of <span class="ic" style="width:16px;height:4px;vertical-align:2px;margin-left:0px;margin-right:0px"><svg width="16" height="4" viewBox="0 0 16 4"><rect x="0.5" y="0.5" width="13.5" height="3" stroke="#8c8c8c" stroke-width="1" fill="#262932"/></svg></span><span style="display:inline-block;width:1.5px"></span><b class="o" style="letter-spacing:-0.05px">BuildButton</b> is <span class="g">true</span></div>
<div class="ln c" style="left:62px;top:718px"><span class="ic" style="width:16px;height:12px;vertical-align:-2px;margin-left:0px;margin-right:0px"><svg width="16" height="12" viewBox="0 0 16 12"><rect x="1.9" y="0.3" width="5.2" height="3.5" fill="#6a8cd4"/><rect x="8.8" y="7.4" width="5.5" height="4" fill="#6a8cd4"/><path d="M5 3.6 L10 7.8" stroke="#1c2028" stroke-width="1.1"/><path d="M9.3 1.3 Q10.6 0.6 11.2 1.6 Q11.6 2.6 10.4 3.4 V4.6" stroke="#23272f" stroke-width="0.9" fill="none"/></svg></span>Pick the <span class="ic" style="width:16px;height:10px;vertical-align:-3px;margin-left:0px;margin-right:0px"><svg width="16" height="10" viewBox="0 0 16 10"><rect x="6.6" y="0.3" width="2.7" height="2" rx="0.8" fill="#383838"/><rect x="6.6" y="2.2" width="2.7" height="5.4" fill="#5c5e5e"/><rect x="3" y="7.4" width="10" height="1.2" fill="#6e2222"/><rect x="7" y="7.4" width="2" height="1.2" fill="#8a4444"/><rect x="2.9" y="8.5" width="10.2" height="1.2" fill="#121212"/></svg></span><span style="display:inline-block;width:1.5px"></span><b class="o" style="letter-spacing:-0.3px">TurretBase</b> that is nearest to <span class="e">CursorX();CursorY()</span></div>
<div class="ln c" style="left:62px;top:740px"><span class="ic" style="width:16px;height:10px;vertical-align:-1px;margin-left:0px;margin-right:0px"><svg width="16" height="10" viewBox="0 0 16 10"><defs><linearGradient id="gv" x1="0" y1="0" x2="0" y2="1"><stop offset="0" stop-color="#5b9be0"/><stop offset=".5" stop-color="#5597e6"/><stop offset=".5" stop-color="#3a8ff2"/><stop offset="1" stop-color="#3990f6"/></linearGradient></defs><rect x="2" y="0" width="13" height="10" rx="1.5" fill="url(#gv)"/><text x="8.5" y="8" font-family="Liberation Serif" font-size="8" fill="#b8d4f4" text-anchor="middle">Var</text></svg></span>The variable <span class="ic" style="width:16px;height:10px;vertical-align:-1px;margin-left:0px;margin-right:0px"><svg width="16" height="10" viewBox="0 0 16 10"><g stroke="#4fb8c6" stroke-width="1.1" fill="none" stroke-linejoin="round" stroke-linecap="round"><path d="M3.2 7.4 V2.6 L7.3 0.7 L11.2 2.6 V5.4 M3.2 2.6 L7.3 4.5 L11.2 2.6 M7.3 4.5 V6.6 M3.2 7.4 L6 9.2"/><path d="M8.2 9 Q9.3 7 10.8 8.3 Q12.1 9.7 13.6 7.4"/></g></svg></span><span class="v">Activated</span> of <span class="ic" style="width:16px;height:10px;vertical-align:-3px;margin-left:0px;margin-right:0px"><svg width="16" height="10" viewBox="0 0 16 10"><rect x="6.6" y="0.3" width="2.7" height="2" rx="0.8" fill="#383838"/><rect x="6.6" y="2.2" width="2.7" height="5.4" fill="#5c5e5e"/><rect x="3" y="7.4" width="10" height="1.2" fill="#6e2222"/><rect x="7" y="7.4" width="2" height="1.2" fill="#8a4444"/><rect x="2.9" y="8.5" width="10.2" height="1.2" fill="#121212"/></svg></span><span style="display:inline-block;width:1.5px"></span><b class="o" style="letter-spacing:-0.3px">TurretBase</b> is <span class="g">false</span></div>
<div class="ln add" style="left:62px;top:761px">Add condition</div>
<div class="ln a" style="left:605px;top:695px"><span class="ic" style="width:16px;height:10px;vertical-align:-1px;margin-left:0px;margin-right:0px"><svg width="16" height="10" viewBox="0 0 16 10"><defs><linearGradient id="gv" x1="0" y1="0" x2="0" y2="1"><stop offset="0" stop-color="#5b9be0"/><stop offset=".5" stop-color="#5597e6"/><stop offset=".5" stop-color="#3a8ff2"/><stop offset="1" stop-color="#3990f6"/></linearGradient></defs><rect x="2" y="0" width="13" height="10" rx="1.5" fill="url(#gv)"/><text x="8.5" y="8" font-family="Liberation Serif" font-size="8" fill="#b8d4f4" text-anchor="middle">Var</text></svg></span>Change the variable <span class="ic" style="width:16px;height:10px;vertical-align:-1px;margin-left:0px;margin-right:0px"><svg width="16" height="10" viewBox="0 0 16 10"><g stroke="#4fb8c6" stroke-width="1.1" fill="none" stroke-linejoin="round" stroke-linecap="round"><path d="M3.2 7.4 V2.6 L7.3 0.7 L11.2 2.6 V5.4 M3.2 2.6 L7.3 4.5 L11.2 2.6 M7.3 4.5 V6.6 M3.2 7.4 L6 9.2"/><path d="M8.2 9 Q9.3 7 10.8 8.3 Q12.1 9.7 13.6 7.4"/></g></svg></span><span class="v" style="letter-spacing:-0.3px">BeingPlaced</span> of <span class="ic" style="width:16px;height:10px;vertical-align:-3px;margin-left:0px;margin-right:0px"><svg width="16" height="10" viewBox="0 0 16 10"><rect x="6.6" y="0.3" width="2.7" height="2" rx="0.8" fill="#383838"/><rect x="6.6" y="2.2" width="2.7" height="5.4" fill="#5c5e5e"/><rect x="3" y="7.4" width="10" height="1.2" fill="#6e2222"/><rect x="7" y="7.4" width="2" height="1.2" fill="#8a4444"/><rect x="2.9" y="8.5" width="10.2" height="1.2" fill="#121212"/></svg></span><span style="display:inline-block;width:1.5px"></span><b class="o" style="letter-spacing:-0.3px">TurretBase</b>: <span class="p">set to true</span></div>
<div class="ln add" style="left:605px;top:716px">Add action</div>
<div class="ln a" style="left:56px;top:783px">Repeat for each instance of <span class="ic" style="width:16px;height:10px;vertical-align:-3px;margin-left:0px;margin-right:0px"><svg width="16" height="10" viewBox="0 0 16 10"><rect x="6.6" y="0.3" width="2.7" height="2" rx="0.8" fill="#383838"/><rect x="6.6" y="2.2" width="2.7" height="5.4" fill="#5c5e5e"/><rect x="3" y="7.4" width="10" height="1.2" fill="#6e2222"/><rect x="7" y="7.4" width="2" height="1.2" fill="#8a4444"/><rect x="2.9" y="8.5" width="10.2" height="1.2" fill="#121212"/></svg></span><span style="display:inline-block;width:1.5px"></span><b class="o" style="letter-spacing:-0.3px">TurretBase</b><span style="display:inline-block;width:3px"></span>:</div>
<div class="ln c" style="left:62px;top:804px"><span class="ic" style="width:16px;height:10px;vertical-align:-1px;margin-left:0px;margin-right:0px"><svg width="16" height="10" viewBox="0 0 16 10"><defs><linearGradient id="gv" x1="0" y1="0" x2="0" y2="1"><stop offset="0" stop-color="#5b9be0"/><stop offset=".5" stop-color="#5597e6"/><stop offset=".5" stop-color="#3a8ff2"/><stop offset="1" stop-color="#3990f6"/></linearGradient></defs><rect x="2" y="0" width="13" height="10" rx="1.5" fill="url(#gv)"/><text x="8.5" y="8" font-family="Liberation Serif" font-size="8" fill="#b8d4f4" text-anchor="middle">Var</text></svg></span>The variable <span class="ic" style="width:16px;height:10px;vertical-align:-1px;margin-left:0px;margin-right:0px"><svg width="16" height="10" viewBox="0 0 16 10"><g stroke="#4fb8c6" stroke-width="1.1" fill="none" stroke-linejoin="round" stroke-linecap="round"><path d="M3.2 7.4 V2.6 L7.3 0.7 L11.2 2.6 V5.4 M3.2 2.6 L7.3 4.5 L11.2 2.6 M7.3 4.5 V6.6 M3.2 7.4 L6 9.2"/><path d="M8.2 9 Q9.3 7 10.8 8.3 Q12.1 9.7 13.6 7.4"/></g></svg></span><span class="v">Selected</span> of <span class="ic" style="width:16px;height:10px;vertical-align:-3px;margin-left:0px;margin-right:0px"><svg width="16" height="10" viewBox="0 0 16 10"><rect x="6.6" y="0.3" width="2.7" height="2" rx="0.8" fill="#383838"/><rect x="6.6" y="2.2" width="2.7" height="5.4" fill="#5c5e5e"/><rect x="3" y="7.4" width="10" height="1.2" fill="#6e2222"/><rect x="7" y="7.4" width="2" height="1.2" fill="#8a4444"/><rect x="2.9" y="8.5" width="10.2" height="1.2" fill="#121212"/></svg></span><span style="display:inline-block;width:1.5px"></span><b class="o" style="letter-spacing:-0.3px">TurretBase</b> is <span class="g">true</span></div>
<div class="ln a" style="left:605px;top:803px"><span class="ic" style="width:16px;height:13px;vertical-align:-2px;margin-left:0px;margin-right:0px"><svg width="16" height="13" viewBox="0 0 16 13"><path d="M1.5 1.5 H7 L5.5 11 H2 Z" fill="#b8d8ee"/><path d="M8.5 0 L3 13" stroke="#111" stroke-width="1.2"/></svg></span>Show <span class="ic" style="width:16px;height:14px;vertical-align:-3px;margin-left:0px;margin-right:0px"><svg width="16" height="14" viewBox="0 0 16 14"><circle cx="8" cy="7" r="7" fill="#0b99e3"/></svg></span><span style="display:inline-block;width:1.5px"></span><b class="o" style="letter-spacing:-0.08px">RangeIndicator</b></div></body></html>
